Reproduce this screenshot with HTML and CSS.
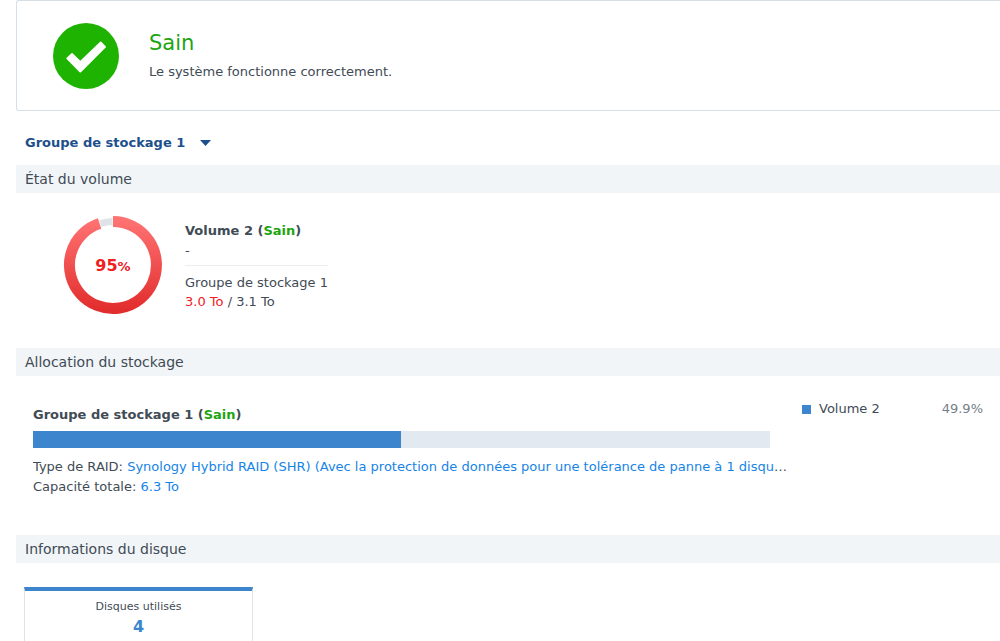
FILE: index.html
```html
<!DOCTYPE html>
<html lang="fr">
<head>
<meta charset="utf-8">
<title>Gestionnaire de stockage</title>
<link rel="stylesheet" href="styles.css">
</head>
<body>
<main class="page">
  <section class="status">
    <svg class="status-icon" viewBox="0 0 66 66" aria-hidden="true">
      <circle cx="33" cy="33" r="33" fill="#1eb300"/>
      <path d="M13.6 34.8 18.4 30.2Q19 29.7 19.6 30.2L27.3 37.8 47.1 18.8Q47.7 18.3 48.3 18.8L52.7 23.2Q53.3 23.8 52.7 24.4L28 49.3Q27.3 49.9 26.6 49.3L13.6 36Q13 35.4 13.6 34.8Z" fill="#fff"/>
    </svg>
    <div>
      <h1 class="status-title">Sain</h1>
      <p class="status-text">Le système fonctionne correctement.</p>
    </div>
  </section>

  <button class="group-toggle" type="button">
    Groupe de stockage 1
    <svg class="caret" viewBox="0 0 11 6" aria-hidden="true"><path d="M0 0H11L5.5 6Z" fill="#1d4f8c"/></svg>
  </button>

  <section>
    <h2 class="section-title">État du volume</h2>
    <div class="volume">
      <svg class="donut" viewBox="0 0 100 100" role="img" aria-label="95%">
        <defs>
          <linearGradient id="usage" gradientUnits="userSpaceOnUse" x1="0" y1="0" x2="0" y2="100">
            <stop offset="0.05" stop-color="#ff7272"/>
            <stop offset="0.95" stop-color="#e22d2d"/>
          </linearGradient>
        </defs>
        <path d="M37.3 8.6A43.3 43.3 0 0 1 49.5 6.5" fill="none" stroke="#dfe2e6" stroke-width="7"/>
        <path d="M50 6.5A43.5 43.5 0 1 1 36.6 8.6" fill="none" stroke="url(#usage)" stroke-width="11"/>
        <text class="donut-value" x="50" y="56" text-anchor="middle">95<tspan class="donut-unit">%</tspan></text>
      </svg>
      <div class="volume-info">
        <h3 class="name">Volume 2 (<span class="ok">Sain</span>)</h3>
        <p class="description">-</p>
        <p class="detail">Groupe de stockage 1</p>
        <p class="detail"><span class="alert">3.0 To</span> / 3.1 To</p>
      </div>
    </div>
  </section>

  <section>
    <h2 class="section-title">Allocation du stockage</h2>
    <div class="allocation">
      <div class="pool">
        <h3 class="name">Groupe de stockage 1 (<span class="ok">Sain</span>)</h3>
        <div class="bar"><div class="bar-used" style="width: 49.9%"></div></div>
        <p class="pool-line">Type de RAID: <span class="value">Synology Hybrid RAID (SHR) (Avec la protection de données pour une tolérance de panne à 1 disqu</span>…</p>
        <p class="pool-line">Capacité totale: <span class="value">6.3 To</span></p>
      </div>
      <div class="legend">
        <span class="swatch"></span>
        <span>Volume 2</span>
        <span class="percent">49.9%</span>
      </div>
    </div>
  </section>

  <section>
    <h2 class="section-title">Informations du disque</h2>
    <div class="disks">
      <div class="disk-card">
        <p class="disk-label">Disques utilisés</p>
        <p class="disk-count">4</p>
      </div>
    </div>
  </section>
</main>
</body>
</html>
```
FILE: styles.css
```css
* {
  box-sizing: border-box;
}

html {
  overflow: hidden;
}

body {
  margin: 0;
  background: #fff;
  color: #414b55;
  font: 13px/20px Verdana, "DejaVu Sans", sans-serif;
}

h1, h2, h3, p {
  margin: 0;
}

.page {
  padding-left: 16px;
}

.status {
  display: flex;
  align-items: center;
  gap: 30px;
  height: 111px;
  padding-left: 36px;
  border: 1px solid #d4dfe8;
  border-right: 0;
  border-radius: 3px 0 0 3px;
}

.status-icon {
  width: 66px;
  height: 66px;
}

.status-title {
  color: #1da511;
  font-size: 21px;
  font-weight: 400;
  line-height: 32px;
}

.status-text {
  line-height: 26px;
}

.group-toggle {
  display: flex;
  align-items: center;
  gap: 15px;
  margin: 20px 0 10px;
  padding: 0 9px;
  border: 0;
  background: none;
  color: #1d4f8c;
  font: bold 13px/24px Verdana, "DejaVu Sans", sans-serif;
}

.caret {
  width: 11px;
  height: 6px;
}

.section-title {
  padding: 0 9px;
  background: #f1f5f8;
  font-size: 14px;
  font-weight: 400;
  line-height: 28px;
}

.volume {
  display: flex;
  gap: 22px;
  padding: 22px 0 33px 47px;
}

.donut {
  width: 100px;
  height: 100px;
}

.donut-value {
  fill: #f0201f;
  font-size: 16px;
  font-weight: 700;
}

.donut-unit {
  font-size: 13px;
}

.volume-info {
  padding-top: 6px;
}

.name {
  font-size: 13px;
  font-weight: 700;
}

.ok {
  color: #1da511;
}

.description {
  margin-bottom: 7px;
  padding-bottom: 4px;
  border-bottom: 1px solid #ebeef0;
}

.detail {
  line-height: 19px;
}

.alert {
  color: #f0201f;
}

.allocation {
  display: grid;
  grid-template-columns: minmax(0, 1fr) 181px;
  gap: 32px;
  padding: 23px 17px 38px;
}

.pool {
  padding-top: 6px;
}

.bar {
  height: 17px;
  margin: 6px 0 9px;
  background: #e3e9f1;
}

.bar-used {
  height: 100%;
  background: #3d86ce;
}

.pool-line {
  white-space: nowrap;
}

.value {
  color: #1684e5;
}

.legend {
  display: flex;
  align-items: center;
  gap: 8px;
  height: 20px;
}

.swatch {
  width: 9px;
  height: 9px;
  background: #3d86ce;
}

.percent {
  margin-left: auto;
  color: #757e88;
}

.disks {
  padding: 24px 8px;
}

.disk-card {
  width: 229px;
  padding: 6px 0 16px;
  border: 1px solid #dde4ec;
  border-top: 4px solid #3d86ce;
  text-align: center;
}

.disk-label {
  font-size: 11px;
}

.disk-count {
  color: #3d86ce;
  font-size: 16px;
  font-weight: 700;
}
```
